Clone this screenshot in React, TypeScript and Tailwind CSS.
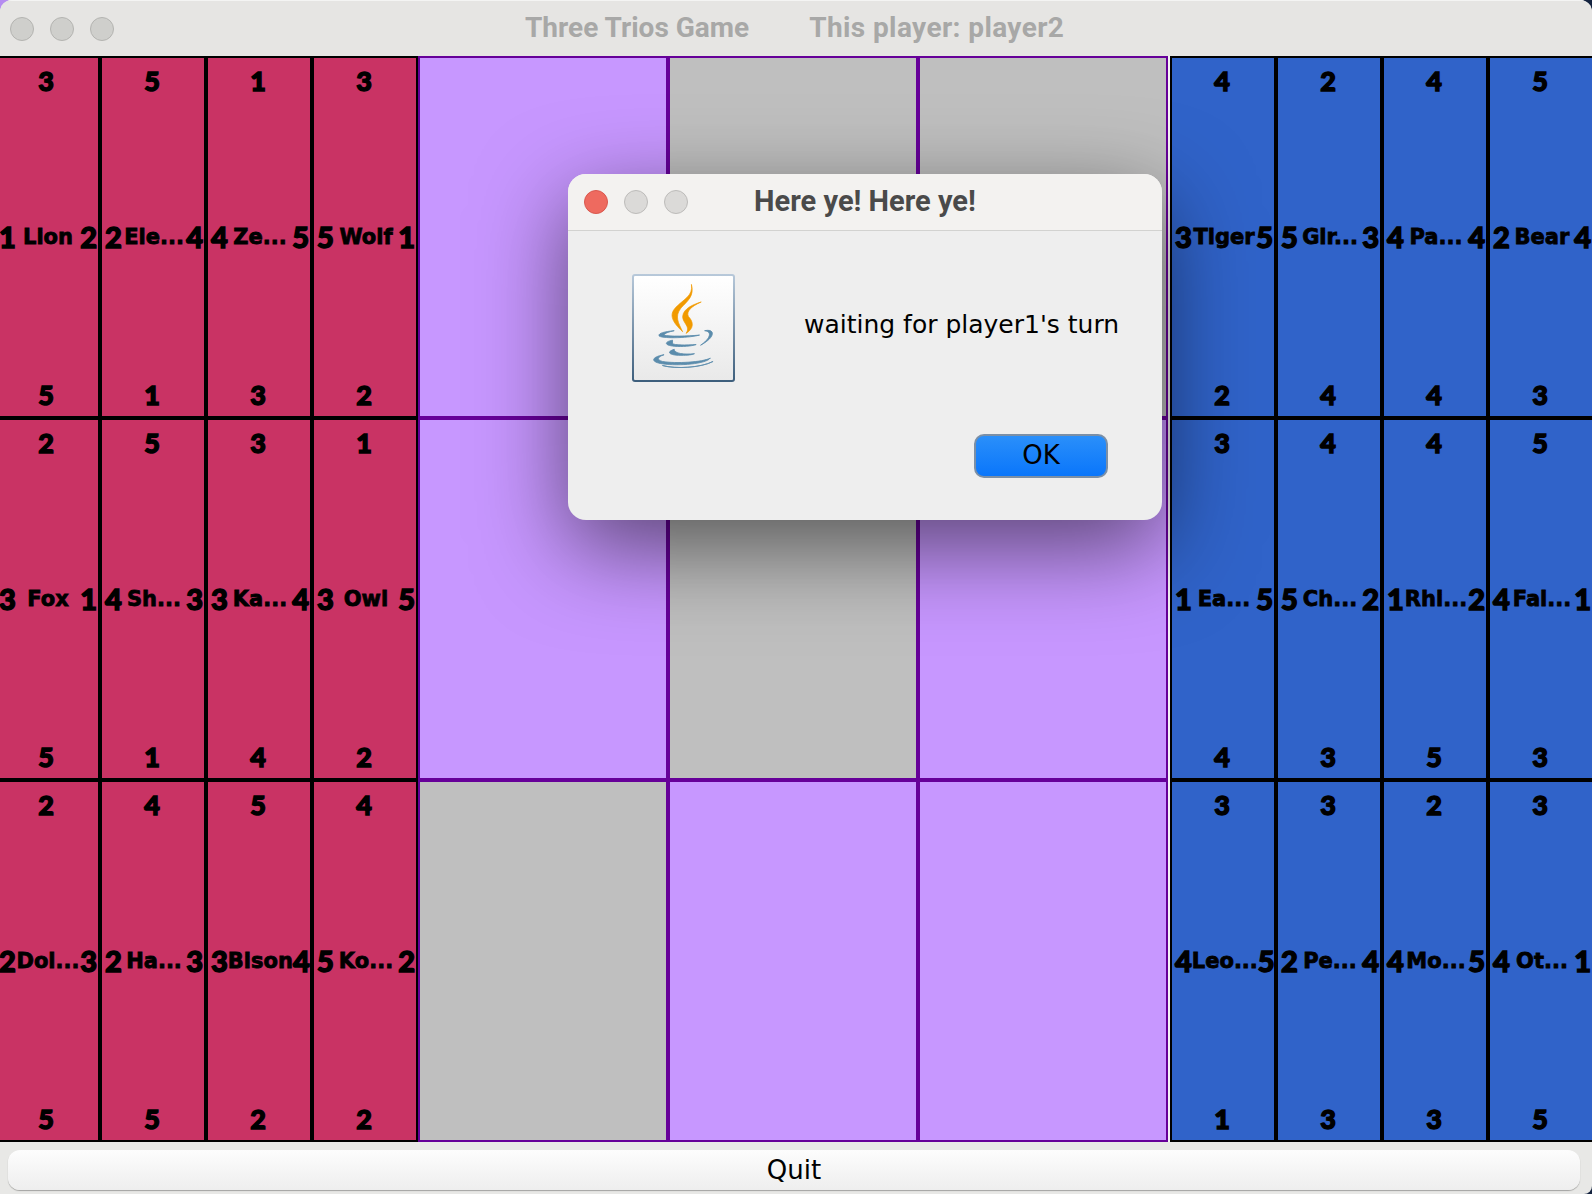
import React from "react";

type C = [string, string, string, string, string];

const red: C[] = [
  ["3", "1", "Lion", "2", "5"], ["5", "2", "Ele...", "4", "1"], ["1", "4", "Ze...", "5", "3"], ["3", "5", "Wolf", "1", "2"],
  ["2", "3", "Fox", "1", "5"], ["5", "4", "Sh...", "3", "1"], ["3", "3", "Ka...", "4", "4"], ["1", "3", "Owl", "5", "2"],
  ["2", "2", "Dol...", "3", "5"], ["4", "2", "Ha...", "3", "5"], ["5", "3", "Bison", "4", "2"], ["4", "5", "Ko...", "2", "2"],
];
const blue: C[] = [
  ["4", "3", "Tiger", "5", "2"], ["2", "5", "Gir...", "3", "4"], ["4", "4", "Pa...", "4", "4"], ["5", "2", "Bear", "4", "3"],
  ["3", "1", "Ea...", "5", "4"], ["4", "5", "Ch...", "2", "3"], ["4", "1", "Rhi...", "2", "5"], ["5", "4", "Fal...", "1", "3"],
  ["3", "4", "Leo...", "5", "1"], ["3", "2", "Pe...", "4", "3"], ["2", "4", "Mo...", "5", "3"], ["3", "4", "Ot...", "1", "5"],
];
const cells = [1, 0, 0, 1, 0, 1, 0, 1, 1];

function Card({ c, color }: { c: C; color: string }) {
  return (
    <div
      className={`${color} border-2 border-black flex flex-col justify-between items-center pt-[7px] pb-[5px] pr-[2px] font-['Lato','Liberation_Sans',sans-serif] font-black text-black [-webkit-text-stroke:1.4px_#000]`}
    >
      <span className="text-[27px] leading-[32px]">{c[0]}</span>
      <div className="w-full flex items-center justify-between pl-[2px] mr-[-2px] mb-[2px]">
        <span className="text-[29px] leading-[32px]">{c[1]}</span>
        <span className="font-['DejaVu_Sans',sans-serif] font-bold text-[21px] leading-[32px] [-webkit-text-stroke:0.8px_#000]">{c[2]}</span>
        <span className="text-[29px] leading-[32px]">{c[3]}</span>
      </div>
      <span className="text-[27px] leading-[32px]">{c[4]}</span>
    </div>
  );
}

function Hand({ cards, color }: { cards: C[]; color: string }) {
  return (
    <div className="w-[424px] shrink-0 grid grid-cols-4 grid-rows-3">
      {cards.map((c, i) => (
        <Card key={i} c={c} color={color} />
      ))}
    </div>
  );
}

function Light({ cls }: { cls: string }) {
  return <span className={`block w-6 h-6 rounded-full border ${cls}`} />;
}

function JavaIcon() {
  return (
    <div className="w-[103px] h-[108px] p-[2px] rounded-[3px] bg-[linear-gradient(180deg,#b8c9da,#3d5e7c)]">
      <div className="w-full h-full bg-[linear-gradient(180deg,#ffffff,#e9e9e9)] rounded-[1px]">
        <svg viewBox="46 36 293 306" className="w-full h-full">
          <g fill="#f19a00" stroke="#f19a00" strokeWidth="2">
            <path d="M216 60 C222 95 190 105 168 130 C150 150 158 170 190 200 C178 175 165 155 185 130 C205 108 225 95 216 60Z" />
            <path d="M245 112 C225 118 192 130 190 155 C190 175 215 185 200 205 C225 190 222 170 207 155 C200 140 215 125 245 112Z" />
          </g>
          <g fill="#5b8cac" stroke="#5b8cac" strokeWidth="2.5">
            <path d="M165 197 C130 200 118 206 120 212 C124 220 200 220 240 210 C205 213 150 215 135 210 C135 205 150 200 165 197Z" />
            <path d="M255 197 C285 190 290 215 243 240 C270 222 280 200 255 197Z" />
            <path d="M160 225 C135 230 135 240 165 243 C190 245 215 243 230 238 C200 240 165 240 160 235Z" />
            <path d="M165 252 C140 260 150 270 185 270 C205 270 220 268 225 265 C195 268 165 265 165 252Z" />
            <path d="M135 268 C95 275 95 290 130 295 C180 302 260 295 272 278 C250 290 170 295 130 288 C112 283 115 275 135 268Z" />
            <path d="M130 300 C170 310 240 308 280 288 C250 305 170 312 130 300Z" />
          </g>
        </svg>
      </div>
    </div>
  );
}

export default function App() {
  return (
    <div className="relative w-[1592px] h-[1194px] overflow-hidden bg-[linear-gradient(90deg,#b58cf0_50%,#14233f_50%)]">
      <div className="w-full h-full flex flex-col overflow-hidden rounded-t-[12px] rounded-br-[8px] bg-[#e8e8e6]">
        <header className="h-14 shrink-0 bg-[#e6e5e3] border-t border-[#f4f4f3] flex items-center relative">
          <div className="flex gap-4 ml-[10px]">
            <Light cls="bg-[#cfcfcc] border-[#b4b4b1]" />
            <Light cls="bg-[#cfcfcc] border-[#b4b4b1]" />
            <Light cls="bg-[#cfcfcc] border-[#b4b4b1]" />
          </div>
          <div className="ml-[411px] mb-[2px] flex gap-[60px] font-['Roboto',sans-serif] font-bold text-[28px] text-[#a8a8a7]">
            <span>Three Trios Game</span>
            <span className="tracking-[0.4px]">This player: player2</span>
          </div>
        </header>

        <main className="h-[1086px] shrink-0 flex ml-[-6px] w-[1600px] bg-[#f2f2f2]">
          <Hand cards={red} color="bg-[#c93364]" />
          <div className="w-[750px] shrink-0 grid grid-cols-3 grid-rows-3">
            {cells.map((p, i) => (
              <div key={i} className={`border-2 border-[#660099] ${p ? "bg-[#c797ff]" : "bg-[#bfbfbf]"}`} />
            ))}
          </div>
          <div className="w-[2px] shrink-0" />
          <Hand cards={blue} color="bg-[#3063c9]" />
        </main>

        <footer className="flex-1 pt-2 pl-2 pr-3">
          <button className="w-full h-10 rounded-xl bg-[linear-gradient(180deg,#fdfdfd,#eeeeee)] shadow-[0_1px_1px_rgba(0,0,0,0.3)] font-['DejaVu_Sans',sans-serif] text-[26px] text-black leading-10">
            Quit
          </button>
        </footer>
      </div>

      <div className="absolute left-[568px] top-[174px] w-[594px] h-[346px] rounded-[18px] shadow-[0_28px_90px_rgba(0,0,0,0.55)] bg-[#eeeeee]">
        <div className="h-[57px] rounded-t-[18px] bg-[#f3f2f0] border-b border-[#d2d2d0] flex items-center relative">
          <div className="flex gap-4 ml-4">
            <Light cls="bg-[#ee6a5f] border-[#d9584e]" />
            <Light cls="bg-[#dbdad8] border-[#bdbcba]" />
            <Light cls="bg-[#dbdad8] border-[#bdbcba]" />
          </div>
          <span className="absolute inset-x-0 text-center font-['Roboto',sans-serif] font-bold text-[29px] text-[#4a4a4a]">
            Here ye! Here ye!
          </span>
        </div>
        <div className="flex items-center pl-16 pt-[43px]">
          <JavaIcon />
          <span className="ml-[69px] mb-[6px] font-['DejaVu_Sans',sans-serif] text-[25px] text-black whitespace-nowrap">
            waiting for player1's turn
          </span>
        </div>
        <div className="flex justify-end pr-[54px] mt-[52px]">
          <button className="w-[134px] h-11 pb-[4px] rounded-[10px] border-2 border-[#7b8fa6] bg-[linear-gradient(180deg,#2a8ffa,#0a76fb)] font-['DejaVu_Sans',sans-serif] text-[26px] text-black">
            OK
          </button>
        </div>
      </div>
    </div>
  );
}
